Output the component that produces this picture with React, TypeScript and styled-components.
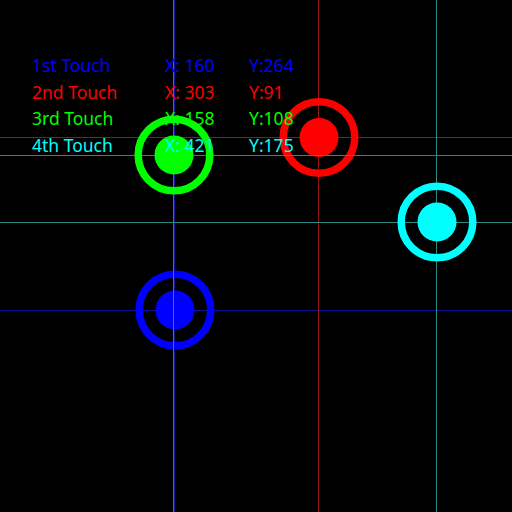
import React from "react";
import styled, { createGlobalStyle } from "styled-components";

const GlobalStyle = createGlobalStyle`
  html, body { margin: 0; padding: 0; background: #000; }
  body { width: 512px; height: 512px; overflow: hidden; }
`;

type Touch = {
  label: string;
  x: number;
  y: number;
  cx: number;
  cy: number;
  vx: number;
  color: string;
  line: string;
};

const touches: Touch[] = [
  { label: "1st Touch", x: 160, y: 264, cx: 175, cy: 310, vx: 174, color: "#0000ff", line: "#10109a" },
  { label: "2nd Touch", x: 303, y: 91, cx: 319, cy: 137.5, vx: 318, color: "#ff0000", line: "#981414" },
  { label: "3rd Touch", x: 158, y: 108, cx: 174, cy: 155, vx: 173, color: "#00ff00", line: "#18a018" },
  { label: "4th Touch", x: 421, y: 175, cx: 437, cy: 222, vx: 436, color: "#00ffff", line: "#2a8a84" },
];

const Screen = styled.div`
  position: relative;
  width: 512px;
  height: 512px;
  background: #000;
  overflow: hidden;
  box-sizing: border-box;
  padding: 52px 0 0 32px;
`;

const TouchLayer = styled.svg`
  position: absolute;
  inset: 0;
  z-index: 0;
`;

const Legend = styled.div`
  position: relative;
  z-index: 1;
  display: grid;
  grid-template-columns: 133px 84px auto;
  font-family: "Noto Sans", "Open Sans", sans-serif;
  font-size: 17.5px;
  line-height: 26.7px;
`;

const Cell = styled.span<{ $color: string }>`
  color: ${(p) => p.$color};
  white-space: nowrap;
`;

function Marker({ t }: { t: Touch }) {
  return (
    <g>
      <line x1={0} y1={Math.floor(t.cy) + 0.5} x2={512} y2={Math.floor(t.cy) + 0.5} stroke={t.line} strokeWidth={1} shapeRendering="crispEdges" />
      <line x1={t.vx + 0.5} y1={0} x2={t.vx + 0.5} y2={512} stroke={t.line} strokeWidth={1} shapeRendering="crispEdges" />
      <circle cx={t.cx} cy={t.cy} r={35.8} fill="none" stroke={t.color} strokeWidth={7.5} />
      <circle cx={t.cx} cy={t.cy} r={19.5} fill={t.color} />
    </g>
  );
}

export default function App() {
  return (
    <>
      <GlobalStyle />
      <Screen>
        <TouchLayer width={512} height={512} viewBox="0 0 512 512">
          {touches.map((t) => (
            <Marker key={t.label} t={t} />
          ))}
        </TouchLayer>
        <Legend>
          {touches.map((t) => (
            <React.Fragment key={t.label}>
              <Cell $color={t.color}>{t.label}</Cell>
              <Cell $color={t.color}>X: {t.x}</Cell>
              <Cell $color={t.color}>Y:{t.y}</Cell>
            </React.Fragment>
          ))}
        </Legend>
      </Screen>
    </>
  );
}
